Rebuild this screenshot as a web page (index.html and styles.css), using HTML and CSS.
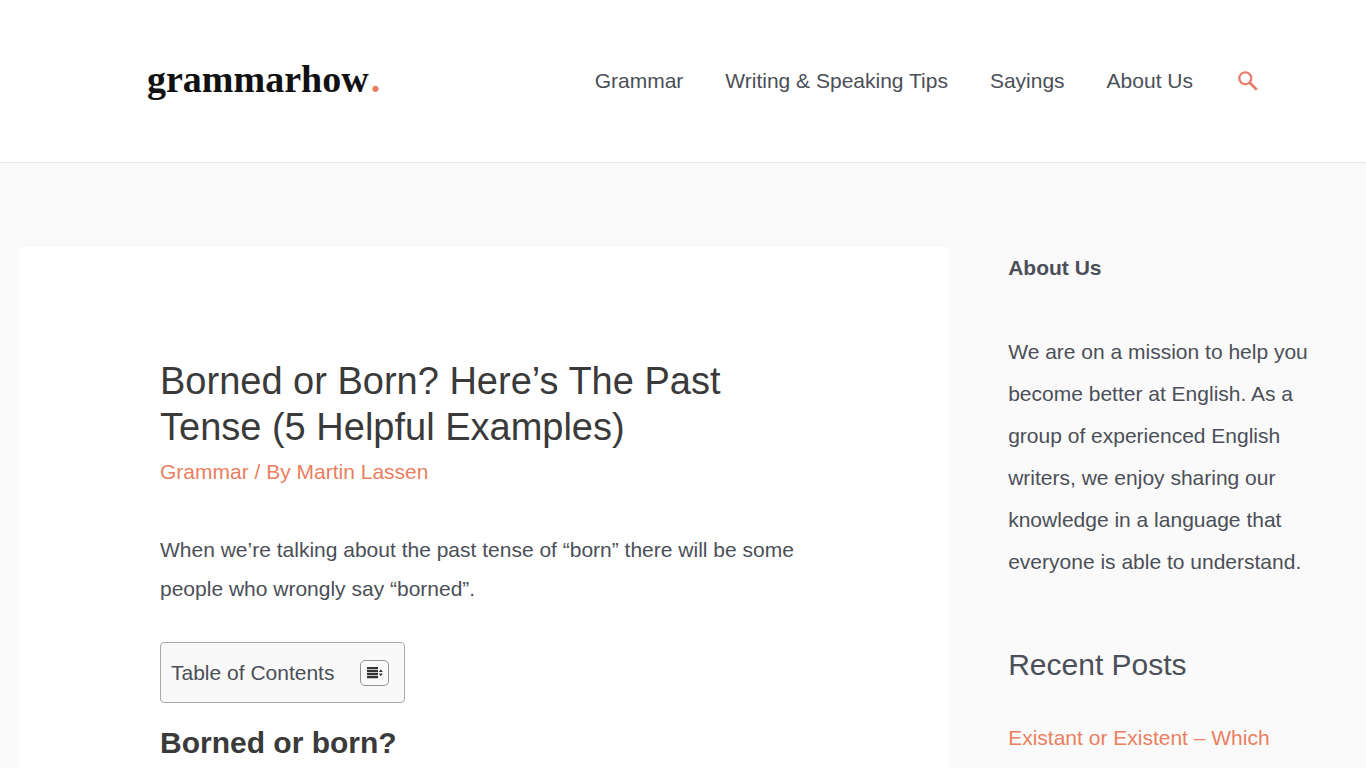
FILE: index.html
```html
<!DOCTYPE html>
<html lang="en">
<head>
<meta charset="utf-8">
<meta name="viewport" content="width=device-width, initial-scale=1">
<title>Borned or Born? Here’s The Past Tense (5 Helpful Examples)</title>
<link rel="stylesheet" href="styles.css">
</head>
<body>
<header class="site-header">
  <a class="logo" href="#">grammarhow<span class="logo-dot">.</span></a>
  <nav class="main-nav" aria-label="Main">
    <a href="#">Grammar</a>
    <a href="#">Writing &amp; Speaking Tips</a>
    <a href="#">Sayings</a>
    <a href="#">About Us</a>
    <button class="search-button" type="button" aria-label="Search">
      <svg viewBox="0 0 20 20" width="20" height="20" fill="none" stroke="currentColor">
        <circle cx="7.3" cy="7.3" r="6" stroke-width="2.3"/>
        <path d="M11.5 11.5 L18.8 18.8" stroke-width="2.7"/>
      </svg>
    </button>
  </nav>
</header>
<div class="site-content">
  <main class="article">
    <h1 class="article-title">Borned or Born? Here’s The Past Tense (5 Helpful Examples)</h1>
    <p class="article-meta"><a href="#">Grammar</a> / By <a href="#">Martin Lassen</a></p>
    <p class="article-text">When we’re talking about the past tense of “born” there will be some people who wrongly say “borned”.</p>
    <div class="toc">
      <span class="toc-title">Table of Contents</span>
      <button class="toc-toggle" type="button" aria-label="Toggle table of contents">
        <svg viewBox="0 0 17 12" width="17" height="12" fill="currentColor">
          <path d="M1 0h11v2.2H1zM1 3h11v2.2H1zM1 6h11v2.2H1zM1 9h11v2.2H1z"/>
          <path d="M12.8 5 L14.8 2.2 L16.8 5zM12.8 6.4 L14.8 9.2 L16.8 6.4z"/>
        </svg>
      </button>
    </div>
    <h2 class="section-title">Borned or born?</h2>
  </main>
  <aside class="sidebar">
    <p class="sidebar-text"><strong>About Us</strong></p>
    <p class="sidebar-text">We are on a mission to help you become better at English. As a group of experienced English writers, we enjoy sharing our knowledge in a language that everyone is able to understand.</p>
    <h2 class="sidebar-title">Recent Posts</h2>
    <a class="post-link" href="#">Existant or Existent – Which</a>
  </aside>
</div>
</body>
</html>
```
FILE: styles.css
```css
* {
  box-sizing: border-box;
}

body {
  display: flex;
  flex-direction: column;
  min-height: 100vh;
  margin: 0;
  background: #fafafa;
  color: #4b4f58;
  font-family: "Liberation Sans", Arial, sans-serif;
  font-size: 21px;
}

a {
  color: #ea7e60;
  text-decoration: none;
}

h1, h2, p {
  margin: 0;
}

button {
  display: flex;
  align-items: center;
  justify-content: center;
  padding: 0;
  border: 0;
  background: none;
}

.site-header {
  display: flex;
  align-items: center;
  justify-content: space-between;
  padding: 60px 108px 60px 147px;
  border-bottom: 1px solid #e6e6e6;
  background: #fff;
}

.logo {
  padding-bottom: 4px;
  color: #111;
  font-family: "Liberation Serif", "Times New Roman", serif;
  font-size: 38px;
  font-weight: 700;
  line-height: 38px;
}

.logo-dot {
  margin-left: 2px;
  color: #ea7e60;
}

.main-nav {
  display: flex;
  align-items: center;
  gap: 42px;
}

.main-nav a {
  color: #4b4f58;
}

.search-button {
  margin-left: 3px;
  color: #e57e6c;
}

.site-content {
  display: grid;
  grid-template-columns: 7fr 3fr;
  flex: 1;
  padding: 84px 20px 0;
}

.article {
  padding: 111px 140px 0;
  background: #fff;
}

.article-title {
  color: #3a3a3a;
  font-size: 38px;
  font-weight: 400;
  line-height: 46px;
}

.article-meta {
  margin-bottom: 36px;
  color: #ea7e60;
  line-height: 44px;
}

.article-text {
  margin-bottom: 34px;
  line-height: 39px;
}

.toc {
  display: inline-flex;
  align-items: center;
  gap: 26px;
  height: 61px;
  margin-bottom: 20px;
  padding: 0 15px 0 10px;
  border: 1px solid #aaa;
  border-radius: 4px;
  background: #f9f9f9;
}

.toc-toggle {
  width: 29px;
  height: 26px;
  border: 1px solid #999191;
  border-radius: 5px;
  color: #333;
}

.section-title {
  color: #3a3a3a;
  font-size: 30px;
  line-height: 40px;
}

.sidebar {
  padding-left: 60px;
}

.sidebar-text {
  margin-bottom: 42px;
  line-height: 42px;
}

.sidebar-title {
  margin-bottom: 32px;
  padding-top: 20px;
  font-size: 30px;
  font-weight: 400;
  line-height: 40px;
}

.post-link {
  line-height: 42px;
}
```
